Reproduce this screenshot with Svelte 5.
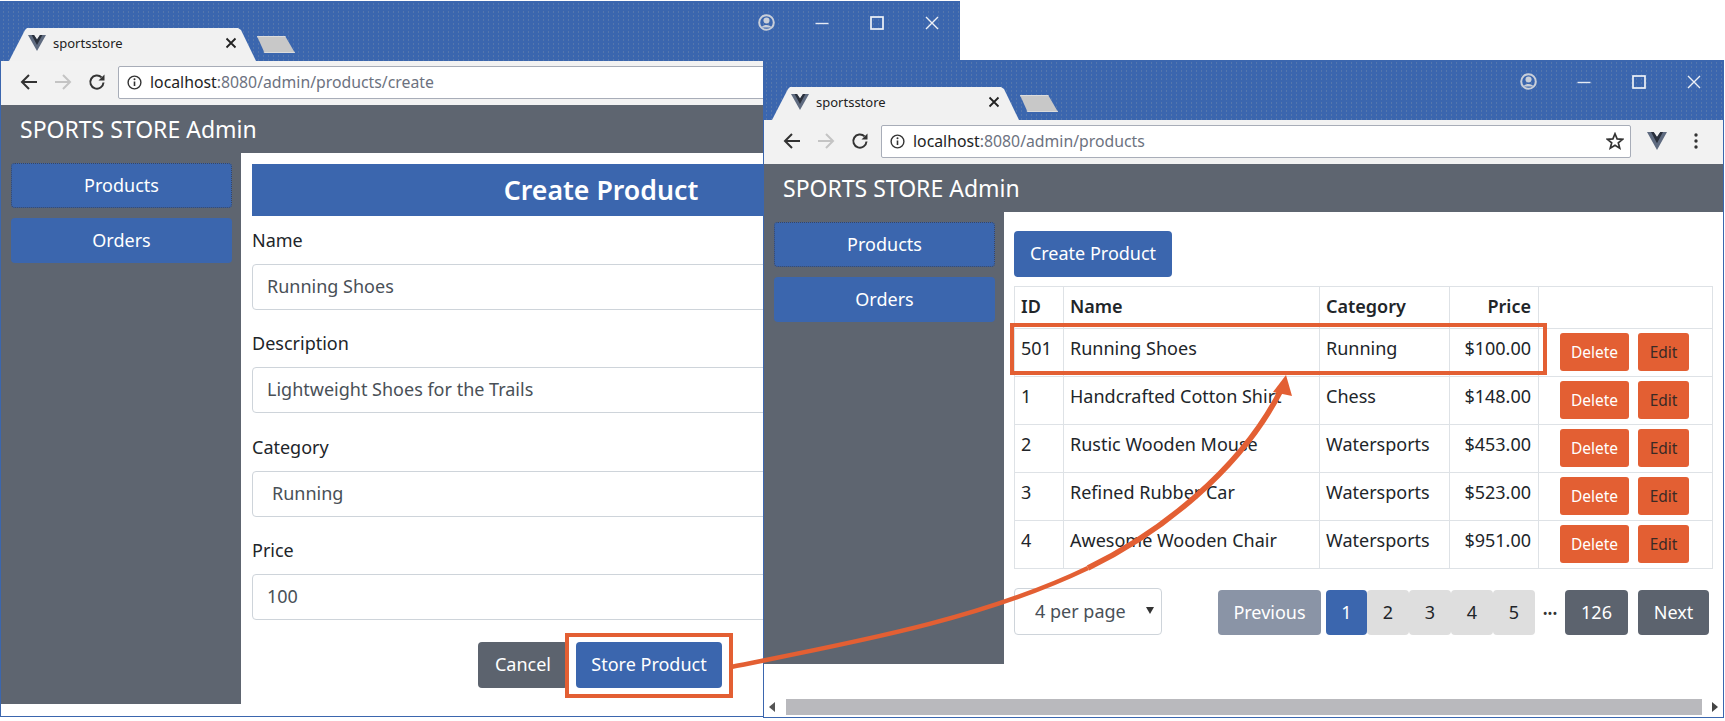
<script>
  const products = [
    { id: 501, name: 'Running Shoes', category: 'Running', price: '$100.00' },
    { id: 1, name: 'Handcrafted Cotton Shirt', category: 'Chess', price: '$148.00' },
    { id: 2, name: 'Rustic Wooden Mouse', category: 'Watersports', price: '$453.00' },
    { id: 3, name: 'Refined Rubber Car', category: 'Watersports', price: '$523.00' },
    { id: 4, name: 'Awesome Wooden Chair', category: 'Watersports', price: '$951.00' }
  ];
  const fields = [
    { label: 'Name', value: 'Running Shoes' },
    { label: 'Description', value: 'Lightweight Shoes for the Trails' },
    { label: 'Category', value: 'Running', select: true },
    { label: 'Price', value: '100' }
  ];
  const pages = [2, 3, 4, 5];
</script>

{#snippet logo(size)}
  <svg class="logo" width={size} height={size} viewBox="0 0 18 18">
    <polygon points="0,1 6,1 9,5.5 12,1 18,1 9,17" fill="#5f6b80" />
    <polygon points="3.6,1 6,1 9,5.5 12,1 14.4,1 9,11" fill="#2a303c" />
  </svg>
{/snippet}

{#snippet chrome(path, extras)}
  <div class="titlebar">
    <div class="tab">
      {@render logo(18)}
      <span class="tab-title">sportsstore</span>
      <svg class="tab-close" width="12" height="12" viewBox="0 0 12 12"><path d="M1.5 1.5l9 9M10.5 1.5l-9 9" stroke="#222" stroke-width="1.8" /></svg>
    </div>
    <div class="new-tab"></div>
    <div class="controls">
      <svg class="avatar" width="17" height="17" viewBox="0 0 17 17">
        <circle cx="8.5" cy="8.5" r="7.3" fill="none" stroke="#c9cfd9" stroke-width="2" />
        <circle cx="8.5" cy="6.6" r="3" fill="#c9cfd9" />
        <path d="M3.6 13.6c.8-3.4 9-3.4 9.8 0z" fill="#c9cfd9" />
      </svg>
      <svg width="14" height="14" viewBox="0 0 14 14"><path d="M0.5 7.5h13" stroke="#e6ebf4" stroke-width="1.4" /></svg>
      <svg width="14" height="14" viewBox="0 0 14 14"><rect x="1" y="1" width="12" height="12" fill="none" stroke="#eef1f7" stroke-width="1.7" /></svg>
      <svg width="14" height="14" viewBox="0 0 14 14"><path d="M1 1l12 12M13 1L1 13" stroke="#eef1f7" stroke-width="1.4" /></svg>
    </div>
  </div>
  <div class="toolbar">
    <svg class="nav" width="18" height="18" viewBox="0 0 18 18"><path d="M17 9H2M9 2L2 9l7 7" fill="none" stroke="#333" stroke-width="2" /></svg>
    <svg class="nav" width="18" height="18" viewBox="0 0 18 18"><path d="M1 9h15M9 2l7 7-7 7" fill="none" stroke="#c4c4c4" stroke-width="2" /></svg>
    <svg class="nav" width="18" height="18" viewBox="0 0 18 18"><path d="M15.5 9.5A6.6 6.6 0 1 1 13.6 4.4" fill="none" stroke="#333" stroke-width="2" /><polygon points="16.5,1.5 16.5,7.5 10.5,7.5" fill="#333" /></svg>
    <div class="address">
      <svg width="15" height="15" viewBox="0 0 15 15"><circle cx="7.5" cy="7.5" r="6.4" fill="none" stroke="#333" stroke-width="1.4" /><path d="M7.5 6.5v4.5" stroke="#333" stroke-width="1.6" /><circle cx="7.5" cy="4.3" r="1" fill="#333" /></svg>
      <span class="url"><b>localhost</b>:8080{path}</span>
      {#if extras}
        <svg class="star" width="18" height="18" viewBox="0 0 18 18"><polygon points="9,1.8 11.1,6.9 16.5,7.3 12.3,10.8 13.7,16.1 9,13.2 4.3,16.1 5.7,10.8 1.5,7.3 6.9,6.9" fill="none" stroke="#333" stroke-width="1.7" /></svg>
      {/if}
    </div>
    {#if extras}
      <div class="ext">{@render logo(20)}</div>
      <svg class="kebab" width="4" height="16" viewBox="0 0 4 16"><circle cx="2" cy="2" r="1.7" fill="#333" /><circle cx="2" cy="8" r="1.7" fill="#333" /><circle cx="2" cy="14" r="1.7" fill="#333" /></svg>
    {/if}
  </div>
  <div class="app-header">SPORTS STORE Admin</div>
{/snippet}

{#snippet sidebar()}
  <nav class="sidebar">
    <button class="nav-btn focused">Products</button>
    <button class="nav-btn">Orders</button>
  </nav>
{/snippet}

<div class="canvas">
  <section class="window create">
    {@render chrome('/admin/products/create', false)}
    <div class="body">
      {@render sidebar()}
      <main class="form">
        <h3>Create Product</h3>
        {#each fields as f}
          <div class="field">
            <span class="label">{f.label}</span>
            <div class="input" class:select={f.select}>{f.value}</div>
          </div>
        {/each}
        <div class="actions">
          <button class="btn gray">Cancel</button>
          <button class="btn blue">Store Product</button>
        </div>
      </main>
    </div>
  </section>

  <section class="window list">
    {@render chrome('/admin/products', true)}
    <div class="body">
      {@render sidebar()}
      <main class="content">
        <button class="btn blue create-btn">Create Product</button>
        <table>
          <thead>
            <tr><th class="c-id">ID</th><th class="c-name">Name</th><th class="c-cat">Category</th><th class="right c-price">Price</th><th></th></tr>
          </thead>
          <tbody>
            {#each products as p}
              <tr>
                <td>{p.id}</td>
                <td>{p.name}</td>
                <td>{p.category}</td>
                <td class="right">{p.price}</td>
                <td class="row-actions">
                  <div class="row-btns">
                    <button class="small del">Delete</button>
                    <button class="small edit">Edit</button>
                  </div>
                </td>
              </tr>
            {/each}
          </tbody>
        </table>
        <div class="pager-row">
          <div class="per-page">4 per page<span class="caret"></span></div>
          <div class="pager">
            <button class="pg prev">Previous</button>
            <button class="pg num current">1</button>
            {#each pages as n}
              <button class="pg num plain">{n}</button>
            {/each}
            <span class="dots">•••</span>
            <button class="pg last">126</button>
            <button class="pg next">Next</button>
          </div>
        </div>
      </main>
    </div>
    <div class="scrollbar">
      <span class="arrow-l"></span>
      <div class="thumb"></div>
      <span class="arrow-r"></span>
    </div>
  </section>

  <svg class="overlay" width="1725" height="721" viewBox="0 0 1725 721">
    <rect x="567" y="635" width="164" height="61" fill="none" stroke="#e35f33" stroke-width="4" />
    <rect x="1012" y="325" width="533" height="48" fill="none" stroke="#e35f33" stroke-width="4" />
    <path d="M731 667C850 643 980 620 1088 568" fill="none" stroke="#e35f33" stroke-width="4.5" />
    <path d="M1088 568C1160 533 1240 470 1280 392" fill="none" stroke="#e35f33" stroke-width="5.5" />
    <polygon points="1286,375 1273,392 1292,396" fill="#e35f33" />
  </svg>
</div>

<style>
  :global(body) {
    margin: 0;
    background: #fff;
  }

  .canvas {
    position: relative;
    width: 1725px;
    height: 721px;
    overflow: hidden;
    font-family: "Noto Sans", sans-serif;
    color: #212529;
  }

  .window {
    position: absolute;
    background: #fff;
    border: 1px solid #3b66ae;
    box-sizing: border-box;
    overflow: hidden;
    display: flex;
    flex-direction: column;
  }

  .create {
    left: 0;
    top: 1px;
    width: 960px;
    height: 716px;
  }

  .list {
    left: 763px;
    top: 60px;
    width: 961px;
    height: 658px;
  }

  .titlebar {
    height: 59px;
    flex: none;
    background-color: #3b66ae;
    background-image: radial-gradient(circle, rgba(215, 205, 170, 0.16) 0.6px, transparent 0.9px);
    background-size: 5px 4px;
    display: flex;
    align-items: flex-end;
    position: relative;
  }

  .tab {
    margin-left: 8px;
    width: 247px;
    height: 33px;
    background: #f1f1f1;
    clip-path: polygon(0 100%, 16px 2px, 18px 0, 229px 0, 232px 2px, 100% 100%);
    display: flex;
    align-items: center;
    box-sizing: border-box;
    padding: 0 19px 3px 19px;
    flex: none;
  }

  .logo {
    flex: none;
    display: block;
  }

  .tab-title {
    margin-left: 7px;
    font-size: 13px;
    flex: 1;
    color: #222;
  }

  .new-tab {
    width: 38px;
    height: 17px;
    margin: 0 0 8px 1px;
    background: #c8c8c8;
    border: 1px solid #dcdcdc;
    box-sizing: border-box;
    clip-path: polygon(0 0, 74% 0, 100% 100%, 20% 100%);
    flex: none;
  }

  .controls {
    position: absolute;
    top: 12px;
    right: 20px;
    display: flex;
    gap: 41px;
    align-items: center;
  }

  .avatar {
    margin-right: -1px;
  }

  .list .controls {
    right: 22px;
  }

  .toolbar {
    height: 44px;
    flex: none;
    background: #f2f2f2;
    display: flex;
    align-items: center;
    padding: 0 0 2px 19px;
    box-sizing: border-box;
  }

  .nav {
    flex: none;
    margin-right: 16px;
  }

  .address {
    flex: 1;
    height: 33px;
    margin-left: -4px;
    background: #fff;
    border: 1px solid #a8adb8;
    border-radius: 2px;
    box-sizing: border-box;
    display: flex;
    align-items: center;
    padding: 0 6px 0 8px;
    min-width: 0;
  }

  .create .address {
    flex: none;
    width: 900px;
  }

  .url {
    margin-left: 8px;
    font-size: 15.8px;
    color: #6c7280;
    white-space: nowrap;
    flex: 1;
  }

  .url b {
    font-weight: 400;
    color: #222;
  }

  .star {
    flex: none;
  }

  .ext {
    margin-left: 16px;
    flex: none;
  }

  .kebab {
    margin-left: 27px;
    margin-right: 25px;
    flex: none;
  }

  .app-header {
    height: 48px;
    flex: none;
    background: #5e6570;
    color: #fff;
    font-size: 23px;
    line-height: 48px;
    padding-left: 19px;
    box-sizing: border-box;
  }

  .body {
    display: flex;
    align-items: stretch;
    flex: none;
  }

  .create .body {
    height: 551px;
  }

  .list .body {
    height: 452px;
  }

  .sidebar {
    width: 240px;
    flex: none;
    background: #5e6570;
    box-sizing: border-box;
    padding: 10px 9px 0 10px;
    display: flex;
    flex-direction: column;
    gap: 10px;
  }

  .nav-btn {
    height: 45px;
    background: #3b66ae;
    color: #fff;
    border: none;
    border-radius: 4px;
    font: inherit;
    font-size: 18px;
    padding: 0 0 2px;
  }

  .nav-btn.focused {
    outline: 1px dotted #3a4660;
    outline-offset: -1px;
  }

  .form {
    flex: none;
    width: 719px;
    box-sizing: border-box;
    padding: 11px 10px 0 11px;
    font-size: 18px;
  }

  h3 {
    margin: 0 0 11.5px;
    height: 52px;
    background: #3b66ae;
    color: #fff;
    font-size: 26.7px;
    font-weight: 600;
    line-height: 52px;
    text-align: center;
  }

  .field {
    margin-bottom: 21.5px;
  }

  .label {
    display: block;
    height: 36px;
    line-height: 24px;
  }

  .input {
    height: 46px;
    line-height: 43px;
    box-sizing: border-box;
    border: 1px solid #ced4da;
    border-radius: 4px;
    padding: 0 14px;
    color: #495057;
  }

  .input.select {
    padding-left: 19px;
  }

  .actions {
    margin-top: 4.5px;
    display: flex;
    justify-content: flex-end;
    gap: 8px;
    padding-right: 228px;
  }

  .btn {
    height: 46px;
    border: none;
    border-radius: 4px;
    color: #fff;
    font: inherit;
    font-size: 18px;
    padding: 0 0 2px;
  }

  .gray {
    background: #5c636e;
    width: 90px;
  }

  .blue {
    background: #3b66ae;
  }

  .actions .blue {
    width: 146px;
  }

  .content {
    flex: 1;
    min-width: 0;
    box-sizing: border-box;
    padding: 19px 10px 0;
    font-size: 18px;
  }

  .create-btn {
    display: block;
    width: 158px;
    margin-bottom: 9px;
  }

  table {
    width: 699px;
    border-collapse: collapse;
    table-layout: fixed;
  }

  th, td {
    border: 1.5px solid #dee2e6;
    padding: 7px 7px 0 6px;
    text-align: left;
    vertical-align: top;
    height: 48px;
    box-sizing: border-box;
    white-space: nowrap;
    overflow: hidden;
  }

  th {
    height: 42px;
    padding-top: 7px;
    font-weight: 600;
  }

  .c-id { width: 49px; }
  .c-name { width: 256px; }
  .c-cat { width: 130px; }
  .c-price { width: 89px; }

  th.right, td.right {
    text-align: right;
  }

  td.row-actions {
    padding: 4px 0 0 21px;
  }

  .row-btns {
    display: flex;
    gap: 9px;
  }

  .small {
    height: 38px;
    border: none;
    border-radius: 3px;
    background: #e35f33;
    font: inherit;
    font-size: 15.5px;
    padding: 0;
  }

  .del {
    width: 69px;
    color: #fff;
  }

  .edit {
    width: 51px;
    color: #3a2a25;
  }

  .pager-row {
    margin-top: 19px;
    padding-right: 4px;
    display: flex;
    justify-content: space-between;
    align-items: flex-end;
  }

  .per-page {
    width: 148px;
    height: 47px;
    box-sizing: border-box;
    border: 1px solid #ced4da;
    border-radius: 4px;
    line-height: 45px;
    padding-left: 20px;
    color: #495057;
    position: relative;
  }

  .caret {
    position: absolute;
    right: 7px;
    top: 18px;
    border: 4px solid transparent;
    border-top: 7px solid #333;
    border-bottom: none;
  }

  .pager {
    display: flex;
    align-items: center;
  }

  .pg {
    height: 45px;
    border: none;
    border-radius: 4px;
    font: inherit;
    font-size: 18px;
    padding: 0 0 2px;
    color: #fff;
  }

  .prev {
    width: 103px;
    background: #8a94a6;
    margin-right: 5px;
  }

  .num {
    width: 42px;
  }

  .current {
    width: 41px;
    background: #3b66ae;
  }

  .plain {
    background: #dedede;
    color: #212529;
  }

  .dots {
    width: 30px;
    text-align: center;
    font-size: 13px;
    color: #333;
    letter-spacing: 0;
  }

  .last {
    width: 63px;
    background: #5c636e;
    margin-right: 10px;
  }

  .next {
    width: 71px;
    background: #5c636e;
  }

  .scrollbar {
    margin-top: 35px;
    height: 16px;
    display: flex;
    align-items: center;
    flex: none;
    padding: 0 5px;
  }

  .thumb {
    flex: 1;
    height: 16px;
    margin: 0 10px 0 11px;
    background: #b9b9bd;
  }

  .arrow-l, .arrow-r {
    width: 0;
    height: 0;
    border: 5px solid transparent;
  }

  .arrow-l {
    border-right: 6px solid #555;
    border-left: none;
  }

  .arrow-r {
    border-left: 6px solid #444;
    border-right: none;
  }

  .overlay {
    position: absolute;
    left: 0;
    top: 0;
    pointer-events: none;
  }
</style>
